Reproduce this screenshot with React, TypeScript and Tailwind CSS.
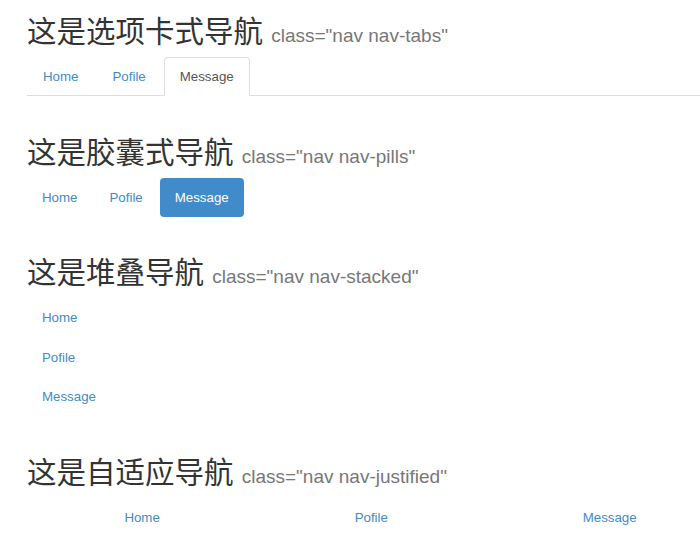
const FONT = "font-['Liberation_Sans','Noto_Sans_CJK_SC',sans-serif]";

const ITEMS = ["Home", "Pofile", "Message"];

function Heading({ title, cls, className = "" }: { title: string; cls: string; className?: string }) {
  return (
    <h2 className={`h-[33px] leading-[33px] text-[29.5px] font-normal text-[#333] mb-[9px] whitespace-nowrap ${className}`}>
      {title}{" "}
      <small className="text-[19px] leading-none text-[#777]">{cls}</small>
    </h2>
  );
}

export default function App() {
  return (
    <div className={`w-[700px] h-[560px] overflow-hidden bg-white pl-[27px] pt-[15px] text-[13.3px] ${FONT}`}>
      <div className="w-[707px]">
        {/* nav-tabs */}
        <Heading title="这是选项卡式导航" cls='class="nav nav-tabs"' />
        <ul className="flex border-b border-[#ddd]">
          {ITEMS.map((item) => {
            const active = item === "Message";
            return (
              <li key={item} className="-mb-px mr-[2px]">
                <a
                  href="#"
                  className={`block px-[15px] py-[9px] leading-[19px] rounded-t-[4px] border ${
                    active
                      ? "border-[#ddd] border-b-transparent bg-white text-[#555]"
                      : "border-transparent text-[#428bca]"
                  }`}
                >
                  {item}
                </a>
              </li>
            );
          })}
        </ul>

        {/* nav-pills */}
        <Heading title="这是胶囊式导航" cls='class="nav nav-pills"' className="mt-[40px]" />
        <ul className="flex gap-[2px]">
          {ITEMS.map((item) => {
            const active = item === "Message";
            return (
              <li key={item}>
                <a
                  href="#"
                  className={`block px-[15px] py-[10px] leading-[19px] rounded-[4px] ${
                    active ? "bg-[#428bca] text-white" : "text-[#428bca]"
                  }`}
                >
                  {item}
                </a>
              </li>
            );
          })}
        </ul>

        {/* nav-stacked */}
        <Heading title="这是堆叠导航" cls='class="nav nav-stacked"' className="mt-[39px]" />
        <ul className="flex flex-col">
          {ITEMS.map((item) => (
            <li key={item}>
              <a href="#" className="block px-[15px] py-[10px] leading-[19.5px] text-[#428bca]">
                {item}
              </a>
            </li>
          ))}
        </ul>

        {/* nav-justified */}
        <Heading title="这是自适应导航" cls='class="nav nav-justified"' className="mt-[39px]" />
        <ul className="flex">
          {ITEMS.map((item) => (
            <li key={item} className="flex-auto text-center">
              <a href="#" className="block px-[15px] py-[10px] leading-[19px] text-[#428bca]">
                {item}
              </a>
            </li>
          ))}
        </ul>
      </div>
    </div>
  );
}
